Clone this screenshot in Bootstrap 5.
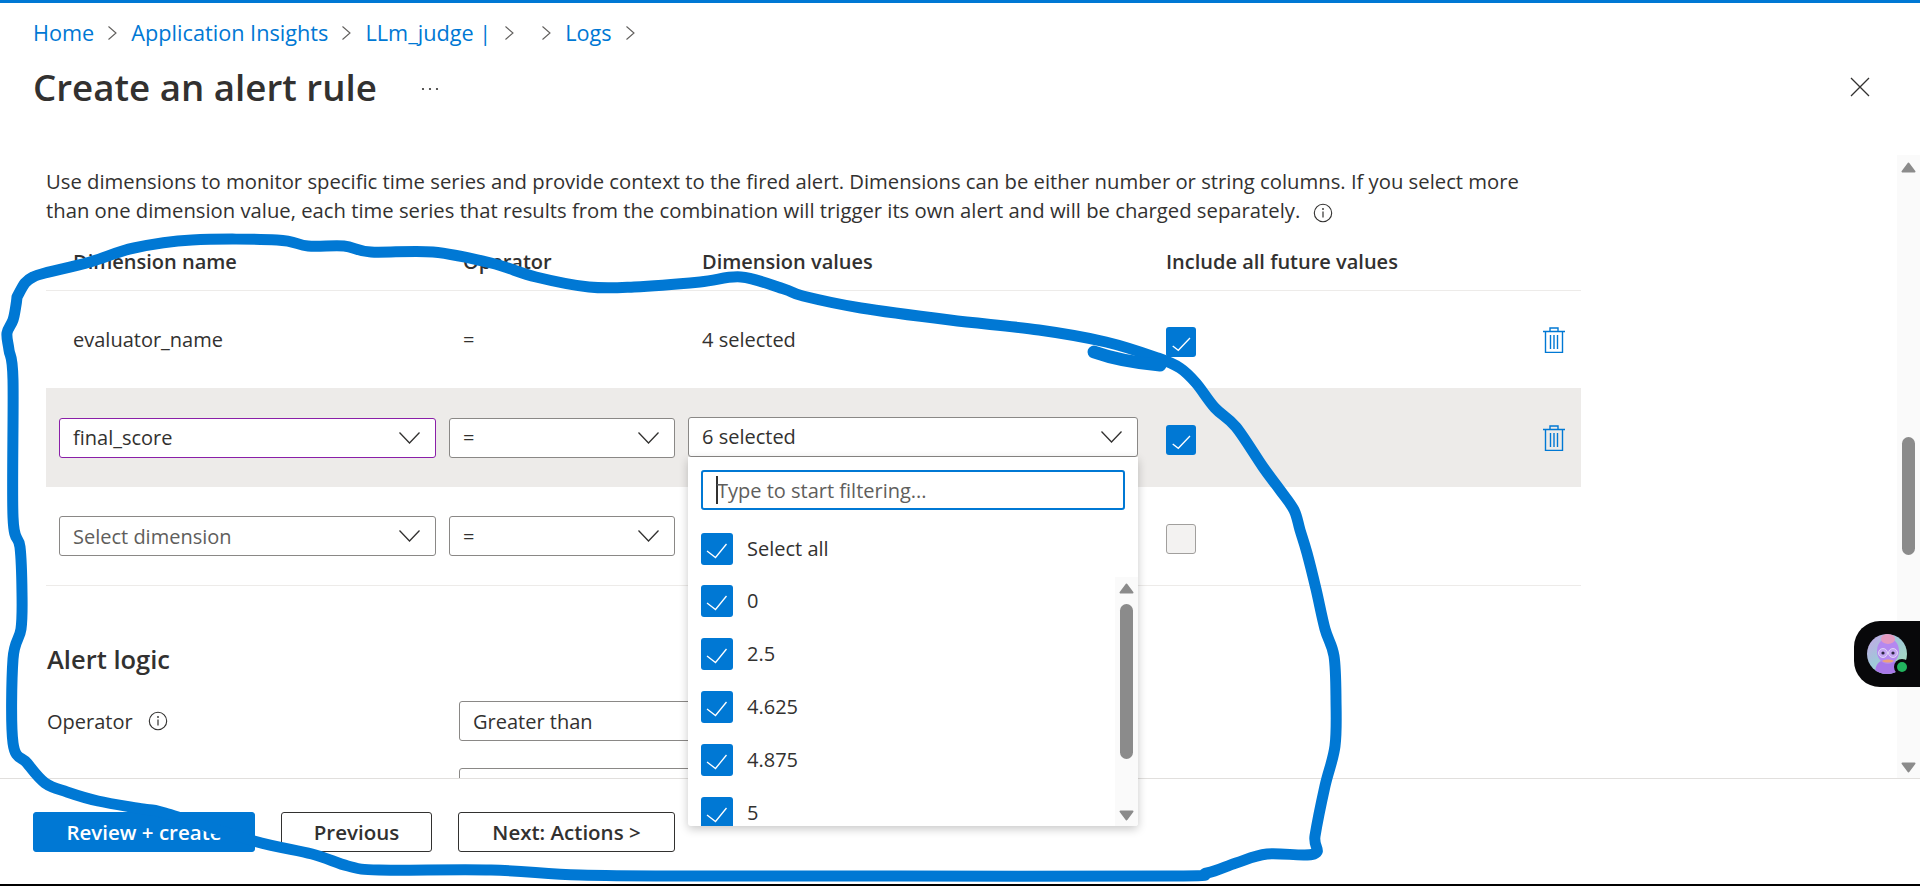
<!DOCTYPE html>
<html lang="en"><head><meta charset="utf-8"><title>Create an alert rule</title>
<link href="https://cdn.jsdelivr.net/npm/bootstrap@5.3.0/dist/css/bootstrap.min.css" rel="stylesheet">
<style>
html,body{height:100%}
body{font-family:"Open Sans","Noto Sans",sans-serif;font-size:20px;color:#323130;background:#fff;height:886px;width:1920px;line-height:29px}
.topline{height:3px;background:#0078d4}
.crumbs{padding:16px 0 0 33px;height:44px;gap:14px;font-size:21.7px;line-height:28px}
.crumbs a{color:#0078d4;text-decoration:none}
.title-row{height:52px;margin-top:14px;padding:0 50px 0 33px}
.title-row h1{font-size:36.7px;font-weight:600;line-height:52px;margin:0}
.more-ico{margin-left:44px;margin-top:4px}
.body-area{height:623px;margin-top:42px}
.content-pane{padding:12px 316px 0 46px;min-width:0}
.intro{margin:0 0 1px;width:1510px;font-size:20.25px}
.dim-grid{display:grid;grid-template-columns:377px 226px 450px 1fr 22px;column-gap:13px;padding:0 16px 0 13px;align-items:center}
.dim-head{height:65px;padding-top:7px;border-bottom:1px solid #edebe9;font-weight:600;box-sizing:border-box}
.dim-row{height:97px}
.dim-row.is-active{height:99px;background:#edebe9}
.dim-row.is-last{height:99px;border-bottom:1px solid #edebe9}
.cell-text{padding-left:14px}
.fut-col{margin-left:15px}
.dd{height:40px;border:1px solid #8a8886;border-radius:3px;background:#fff;padding:0 15px 0 13px}
.dd.is-touched{border-color:#8a1fa8}
.dd.is-up{margin-top:-2px}
.ph{color:#605e5c}
.ck{width:30px;height:30px;border-radius:3px;background:#0078d4;margin-top:5px}
.ck-empty{background:#f3f2f1;border:1px solid #a19f9d}
.logic-head{font-size:25.5px;font-weight:600;line-height:32px;margin:57px 0 26px 1px}
.logic-row{height:40px;margin-bottom:27px}
.logic-label{width:413px;gap:15px;padding-left:1px}
.logic-input{width:640px}
.sb-track{width:23px;background:#fafafa}
.sb-thumb{background:#8b8b8b;border-radius:7px;width:13px}
.sb-main{padding-top:7px}
.sb-main .sb-thumb{height:118px;margin:264px 0 207px}
.foot{height:106px;border-top:1px solid #e1dfdd;padding:33px 0 0 33px;gap:26px}
.act{height:40px;border-radius:3px;border:1px solid #323130;background:#fff;color:#323130;font-size:20.5px;font-weight:600;padding:0;line-height:38px}
.act-main{width:222px;background:#0078d4;border-color:#0078d4;color:#fff}
.act-prev{width:151px}
.act-next{width:217px}
.blackline{height:2px;background:#000}
.pop{left:688px;top:457px;width:450px;height:369px;background:#fff;box-shadow:0 3px 10px rgba(0,0,0,.22);border-radius:0 0 3px 3px;padding:13px 13px 0}
.filter{height:40px;border:2px solid #0078d4;border-radius:3px;padding:0 0 0 13px}
.caret-bar{width:2px;height:28px;background:#323130;margin-right:-1px}
.opt-list{margin-top:23px}
.opt{height:53px;gap:14px;flex:none;line-height:32px}
.opt-first{height:52px}
.opt-box{width:32px;height:32px;border-radius:3px;background:#0078d4}
.pop-sb{right:0;bottom:0;height:249px;padding-top:6px}
.pop-sb .sb-thumb{height:155px;margin:10px 0 51px}
.pill{right:0;top:621px;width:66px;height:66px;background:#08080a;border-radius:26px 0 0 26px;padding:13px}
.ink{left:0;top:0;pointer-events:none}
</style></head>
<body class="d-flex flex-column overflow-hidden position-relative m-0">
<div class="topline flex-shrink-0"></div>
<nav class="crumbs d-flex align-items-center flex-shrink-0">
<a href="#">Home</a><svg width="9" height="14" viewBox="0 0 9 14"><path d="M.5.5l7.5 6.5-7.5 6.5" fill="none" stroke="#605e5c" stroke-width="1.1"/></svg>
<a href="#">Application Insights</a><svg width="9" height="14" viewBox="0 0 9 14"><path d="M.5.5l7.5 6.5-7.5 6.5" fill="none" stroke="#605e5c" stroke-width="1.1"/></svg>
<a href="#">LLm_judge |</a><svg width="9" height="14" viewBox="0 0 9 14"><path d="M.5.5l7.5 6.5-7.5 6.5" fill="none" stroke="#605e5c" stroke-width="1.1"/></svg>
<span></span><svg width="9" height="14" viewBox="0 0 9 14"><path d="M.5.5l7.5 6.5-7.5 6.5" fill="none" stroke="#605e5c" stroke-width="1.1"/></svg>
<a href="#">Logs</a><svg width="9" height="14" viewBox="0 0 9 14"><path d="M.5.5l7.5 6.5-7.5 6.5" fill="none" stroke="#605e5c" stroke-width="1.1"/></svg>
</nav>
<header class="title-row d-flex align-items-center flex-shrink-0">
<h1>Create an alert rule</h1>
<svg class="more-ico" width="18" height="4" viewBox="0 0 18 4"><circle cx="2" cy="2" r="1.1" fill="#323130"/><circle cx="9" cy="2" r="1.1" fill="#323130"/><circle cx="16" cy="2" r="1.1" fill="#323130"/></svg>
<svg class="ms-auto" width="20" height="20" viewBox="0 0 20 20"><path d="M1 1l18 18M19 1L1 19" stroke="#323130" stroke-width="1.3" fill="none"/></svg>
</header>
<div class="body-area d-flex overflow-hidden flex-shrink-0">
<main class="content-pane flex-grow-1 overflow-hidden">
<p class="intro">Use dimensions to monitor specific time series and provide context to the fired alert. Dimensions can be either number or string columns. If you select more than one dimension value, each time series that results from the combination will trigger its own alert and will be charged separately. <svg class="ms-2 align-middle" width="20" height="20" viewBox="0 0 20 20"><circle cx="10" cy="10" r="8.7" fill="none" stroke="#323130" stroke-width="1.1"/><circle cx="10" cy="6" r=".9" fill="#323130"/><path d="M10 8.5v6" stroke="#323130" stroke-width="1.2"/></svg></p>

<div class="dim-grid dim-head">
<div class="cell-text">Dimension name</div><div class="cell-text">Operator</div><div class="cell-text">Dimension values</div><div class="fut-col text-nowrap">Include all future values</div><div></div>
</div>

<div class="dim-grid dim-row">
<div class="cell-text">evaluator_name</div><div class="cell-text">=</div><div class="cell-text">4 selected</div>
<div class="fut-col"><div class="ck"><svg width="30" height="30" viewBox="0 0 30 30"><path d="M6.7 17l5.6 4.3L24 9" fill="none" stroke="#fff" stroke-width="1.3"/></svg></div></div>
<svg width="22" height="26" viewBox="0 0 22 26"><path d="M0 4.5h22M7 4.5V1h8v3.5M2.5 4.5v21h17v-21M7.5 8v14M11 8v14M14.5 8v14" fill="none" stroke="#0078d4" stroke-width="1.4"/></svg>
</div>

<div class="dim-grid dim-row is-active">
<div class="dd is-touched d-flex align-items-center justify-content-between"><span>final_score</span><svg width="21" height="12" viewBox="0 0 21 12"><path d="M.5.5l10 10.5 10-10.5" fill="none" stroke="#323130" stroke-width="1.3"/></svg></div>
<div class="dd d-flex align-items-center justify-content-between"><span>=</span><svg width="21" height="12" viewBox="0 0 21 12"><path d="M.5.5l10 10.5 10-10.5" fill="none" stroke="#323130" stroke-width="1.3"/></svg></div>
<div class="dd is-up d-flex align-items-center justify-content-between"><span>6 selected</span><svg width="21" height="12" viewBox="0 0 21 12"><path d="M.5.5l10 10.5 10-10.5" fill="none" stroke="#323130" stroke-width="1.3"/></svg></div>
<div class="fut-col"><div class="ck"><svg width="30" height="30" viewBox="0 0 30 30"><path d="M6.7 17l5.6 4.3L24 9" fill="none" stroke="#fff" stroke-width="1.3"/></svg></div></div>
<svg width="22" height="26" viewBox="0 0 22 26"><path d="M0 4.5h22M7 4.5V1h8v3.5M2.5 4.5v21h17v-21M7.5 8v14M11 8v14M14.5 8v14" fill="none" stroke="#0078d4" stroke-width="1.4"/></svg>
</div>

<div class="dim-grid dim-row is-last">
<div class="dd d-flex align-items-center justify-content-between"><span class="ph">Select dimension</span><svg width="21" height="12" viewBox="0 0 21 12"><path d="M.5.5l10 10.5 10-10.5" fill="none" stroke="#323130" stroke-width="1.3"/></svg></div>
<div class="dd d-flex align-items-center justify-content-between"><span>=</span><svg width="21" height="12" viewBox="0 0 21 12"><path d="M.5.5l10 10.5 10-10.5" fill="none" stroke="#323130" stroke-width="1.3"/></svg></div>
<div></div>
<div class="fut-col"><div class="ck ck-empty"></div></div>
<div></div>
</div>

<h2 class="logic-head">Alert logic</h2>
<div class="logic-row d-flex align-items-center">
<div class="logic-label d-flex align-items-center"><span>Operator</span><svg width="20" height="20" viewBox="0 0 20 20"><circle cx="10" cy="10" r="8.7" fill="none" stroke="#323130" stroke-width="1.1"/><circle cx="10" cy="6" r=".9" fill="#323130"/><path d="M10 8.5v6" stroke="#323130" stroke-width="1.2"/></svg></div>
<div class="dd logic-input d-flex align-items-center"><span>Greater than</span></div>
</div>
<div class="logic-row d-flex align-items-center">
<div class="logic-label"></div>
<div class="dd logic-input"></div>
</div>
</main>
<aside class="sb-track sb-main d-flex flex-column align-items-center flex-shrink-0">
<svg class="d-block" width="15" height="11" viewBox="0 0 15 11"><path d="M7.5 1.5L1.5 9.5h12z" fill="#8b8b8b" stroke="#8b8b8b" stroke-width="2" stroke-linejoin="round"/></svg>
<div class="sb-thumb"></div>
<svg class="d-block" width="15" height="11" viewBox="0 0 15 11"><path d="M1.5 1.5h12L7.5 9.5z" fill="#8b8b8b" stroke="#8b8b8b" stroke-width="2" stroke-linejoin="round"/></svg>
</aside>
</div>
<footer class="foot d-flex flex-shrink-0 align-items-start">
<button class="btn act act-main">Review + create</button>
<button class="btn act act-prev">Previous</button>
<button class="btn act act-next">Next: Actions &gt;</button>
</footer>
<div class="blackline flex-shrink-0"></div>

<div class="pop position-absolute overflow-hidden">
<div class="filter d-flex align-items-center"><span class="caret-bar"></span><span class="ph">Type to start filtering...</span></div>
<div class="opt-list d-flex flex-column">
<div class="opt opt-first d-flex align-items-start"><div class="opt-box"><svg width="32" height="32" viewBox="0 0 32 32"><path d="M6 16l8.5 6.5L25.5 9" fill="none" stroke="#fff" stroke-width="1.3"/></svg></div><span>Select all</span></div>
<div class="opt d-flex align-items-start"><div class="opt-box"><svg width="32" height="32" viewBox="0 0 32 32"><path d="M6 16l8.5 6.5L25.5 9" fill="none" stroke="#fff" stroke-width="1.3"/></svg></div><span>0</span></div>
<div class="opt d-flex align-items-start"><div class="opt-box"><svg width="32" height="32" viewBox="0 0 32 32"><path d="M6 16l8.5 6.5L25.5 9" fill="none" stroke="#fff" stroke-width="1.3"/></svg></div><span>2.5</span></div>
<div class="opt d-flex align-items-start"><div class="opt-box"><svg width="32" height="32" viewBox="0 0 32 32"><path d="M6 16l8.5 6.5L25.5 9" fill="none" stroke="#fff" stroke-width="1.3"/></svg></div><span>4.625</span></div>
<div class="opt d-flex align-items-start"><div class="opt-box"><svg width="32" height="32" viewBox="0 0 32 32"><path d="M6 16l8.5 6.5L25.5 9" fill="none" stroke="#fff" stroke-width="1.3"/></svg></div><span>4.875</span></div>
<div class="opt d-flex align-items-start"><div class="opt-box"><svg width="32" height="32" viewBox="0 0 32 32"><path d="M6 16l8.5 6.5L25.5 9" fill="none" stroke="#fff" stroke-width="1.3"/></svg></div><span>5</span></div>
</div>
<div class="pop-sb sb-track position-absolute d-flex flex-column align-items-center">
<svg class="d-block" width="15" height="11" viewBox="0 0 15 11"><path d="M7.5 1.5L1.5 9.5h12z" fill="#8b8b8b" stroke="#8b8b8b" stroke-width="2" stroke-linejoin="round"/></svg>
<div class="sb-thumb"></div>
<svg class="d-block" width="15" height="11" viewBox="0 0 15 11"><path d="M1.5 1.5h12L7.5 9.5z" fill="#8b8b8b" stroke="#8b8b8b" stroke-width="2" stroke-linejoin="round"/></svg>
</div>
</div>

<div class="pill position-absolute">
<svg class="d-block overflow-visible" width="40" height="40" viewBox="0 0 40 40">
<defs><linearGradient id="av" x1="0" y1="0" x2="1" y2="1"><stop offset="0" stop-color="#c9a3e8"/><stop offset=".45" stop-color="#9fc8d8"/><stop offset="1" stop-color="#a8e0b8"/></linearGradient>
<clipPath id="avc"><circle cx="20" cy="20" r="20"/></clipPath></defs>
<circle cx="20" cy="20" r="20" fill="url(#av)"/>
<g clip-path="url(#avc)">
<path d="M8 40c0-10 4-14 12-14s14 4 14 14z" fill="#a878e8"/>
<ellipse cx="21" cy="17" rx="11" ry="13" fill="#b488f0"/>
<ellipse cx="21" cy="5" rx="7" ry="5" fill="#e59ac0"/>
<circle cx="16" cy="19" r="4.5" fill="#c4a6f2" stroke="#e8e4f4" stroke-width=".8"/><circle cx="26" cy="19" r="4.5" fill="#c4a6f2" stroke="#e8e4f4" stroke-width=".8"/>
<circle cx="16" cy="19" r="1.6" fill="#2b2440"/><circle cx="26" cy="19" r="1.6" fill="#2b2440"/>
<path d="M15 27c3-2 9-2 12 0-3 2-9 2-12 0z" fill="#eda27c"/>
</g>
<circle cx="35" cy="33" r="8" fill="#08080a"/><circle cx="35" cy="33" r="5" fill="#22b45e"/>
</svg>
</div>

<svg class="ink position-absolute" width="1920" height="886" viewBox="0 0 1920 886">
<path id="ink-line" fill="none" stroke="#0078d4" stroke-width="11" stroke-linejoin="round" stroke-linecap="round" data-pts="17,297 25,283 33,277 45,273 90,262 134,248 192,240 277,240 308,246 344,246 371,252 433,252 491,263 536,277 589,287 634,287 700,282 741,277 784,289 803,296 861,308 950,320 1039,330 1106,342 1158,358 1180,368 1196,383 1215,408 1236,427 1263,467 1280,490 1294,510 1300,530 1307,553 1316,589 1325,629 1334,656 1336,700 1335,746 1325,786 1315,836 1314,854 1267,854 1236,863 1207,873 1173,876 900,876 700,876 580,875 491,870 379,870 348,866 312,854 254,841 165,813 143,809 98,801 67,792 45,783 27,763 13,743 13,659 21,629 22,593 20,547 13,517 13,380 9,350 7,333 13,320 16,305 17,297"/>
<path fill="none" stroke="#0078d4" stroke-width="13" stroke-linecap="round" d="M1094 352Q1122 362 1160 365"/>
</svg>
<script>
// smooth the hand-drawn annotation's traced points into a curve
(function(){var l=document.getElementById('ink-line');var p=l.dataset.pts.split(' ').map(function(s){return s.split(',').map(Number)});var d='M'+p[0];for(var i=0;i<p.length-1;i++){var a=p[Math.max(i-1,0)],b=p[i],c=p[i+1],e=p[Math.min(i+2,p.length-1)];d+='C'+(b[0]+(c[0]-a[0])/6)+' '+(b[1]+(c[1]-a[1])/6)+' '+(c[0]-(e[0]-b[0])/6)+' '+(c[1]-(e[1]-b[1])/6)+' '+c[0]+' '+c[1]}l.setAttribute('d',d)})();
</script>
<script src="https://cdn.jsdelivr.net/npm/bootstrap@5.3.0/dist/js/bootstrap.bundle.min.js"></script>
</body></html>
